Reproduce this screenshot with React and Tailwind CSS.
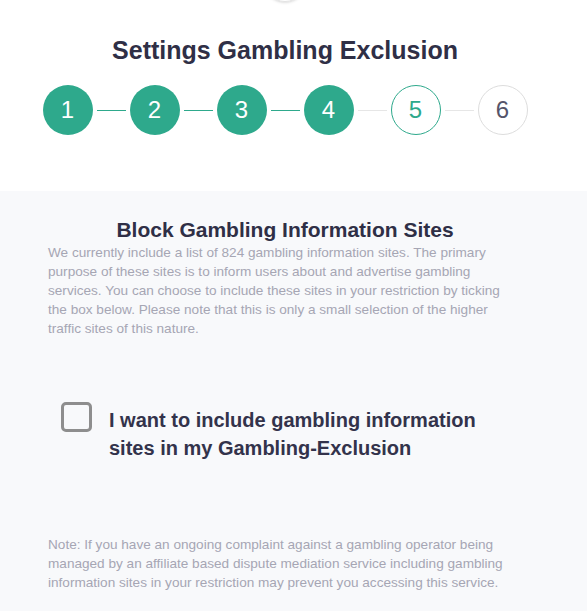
import React from 'react';

const steps = [1, 2, 3, 4, 5, 6];

function Step({ n }) {
    const done = n <= 4;
    const current = n === 5;
    let cls = 'border border-[#dddddd] text-[#55556a] bg-white';
    if (done) cls = 'bg-[#2ea98c] text-white';
    if (current) cls = 'border border-[#2ea98c] text-[#2ea98c] bg-white';
    return (
        <div className={'w-[50px] h-[50px] rounded-full flex items-center justify-center text-[24px] shrink-0 ' + cls}>
            {n}
        </div>
    );
}

export default function App() {
    const [checked, setChecked] = React.useState(false);

    return (
        <div className="w-[587px] h-[611px] overflow-hidden bg-[#f8f9fb]" style={{ fontFamily: '"Liberation Sans", Arial, sans-serif' }}>
            {/* header */}
            <div className="bg-white h-[191px]">
                <div className="w-[570px] flex flex-col items-center">
                    <div className="w-[44px] h-[44px] rounded-full border border-[#e2e2e2] -mt-[42px] shadow-sm" />
                    <h1 className="mt-[33px] text-[25px] leading-[30px] font-bold text-[#2f2f46]">Settings Gambling Exclusion</h1>
                    <div className="mt-[20px] flex items-center">
                        {steps.map((n, i) => (
                            <React.Fragment key={n}>
                                {i > 0 && (
                                    <div className={'w-[29px] h-px mx-[4px] ' + (n <= 4 ? 'bg-[#2ea98c]' : 'bg-[#e6e6e6]')} />
                                )}
                                <Step n={n} />
                            </React.Fragment>
                        ))}
                    </div>
                </div>
            </div>

            {/* content */}
            <div className="w-[570px] px-12 pt-[26px]">
                <h2 className="text-center text-[21px] leading-[26px] font-bold text-[#2f2f46]">Block Gambling Information Sites</h2>
                <p className="text-[13.6px] leading-[19px] text-[#a6a6b4]">
                    We currently include a list of 824 gambling information sites. The primary purpose of these sites is to inform users about and advertise gambling services. You can choose to include these sites in your restriction by ticking the box below. Please note that this is only a small selection of the higher traffic sites of this nature.
                </p>

                <label className="mt-[64px] ml-[13px] flex items-start gap-[17px] cursor-pointer">
                    <input type="checkbox" className="sr-only" checked={checked} onChange={() => setChecked(!checked)} />
                    <span className="w-[31px] h-[30px] border-[3px] border-[#8e8e8e] rounded-[5px] shrink-0 flex items-center justify-center">
                        {checked && <span className="text-[#2ea98c] text-lg font-bold">✓</span>}
                    </span>
                    <span className="text-[20px] leading-[28px] font-bold text-[#33334b] mt-[4px] w-[385px]">
                        I want to include gambling information sites in my Gambling-Exclusion
                    </span>
                </label>

                <p className="mt-[73px] text-[13.6px] leading-[19px] text-[#a6a6b4]">
                    Note: If you have an ongoing complaint against a gambling operator being managed by an affiliate based dispute mediation service including gambling information sites in your restriction may prevent you accessing this service.
                </p>
            </div>
        </div>
    );
}
